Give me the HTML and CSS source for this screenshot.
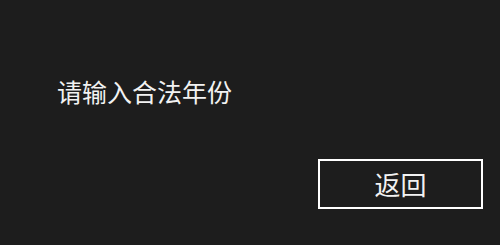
FILE: index.html
```html
<!DOCTYPE html>
<html lang="zh-CN">
<head>
<meta charset="utf-8">
<title>提示</title>
<link rel="stylesheet" href="styles.css">
</head>
<body>
<div class="dialog">
  <p class="message">请输入合法年份</p>
  <div class="actions">
    <button class="btn" type="button">返回</button>
  </div>
</div>
</body>
</html>
```
FILE: styles.css
```css
html, body {
  margin: 0;
  padding: 0;
  background: #1d1d1d;
}
body {
  width: 500px;
  height: 245px;
  font-family: "Noto Sans CJK SC", "Noto Sans", sans-serif;
  color: #f2f2f2;
}
.dialog {
  display: flex;
  flex-direction: column;
  padding: 76px 17px 0 57px;
}
.message {
  margin: 0;
  font-size: 25px;
  line-height: 30px;
  font-weight: 400;
}
.actions {
  display: flex;
  justify-content: flex-end;
  margin-top: 53px;
}
.btn {
  box-sizing: border-box;
  width: 165px;
  height: 50px;
  border: 2px solid #ffffff;
  background: transparent;
  color: #f2f2f2;
  font-family: "Noto Sans CJK SC", "Noto Sans", sans-serif;
  font-size: 26px;
  line-height: 30px;
  padding: 0;
}
```
